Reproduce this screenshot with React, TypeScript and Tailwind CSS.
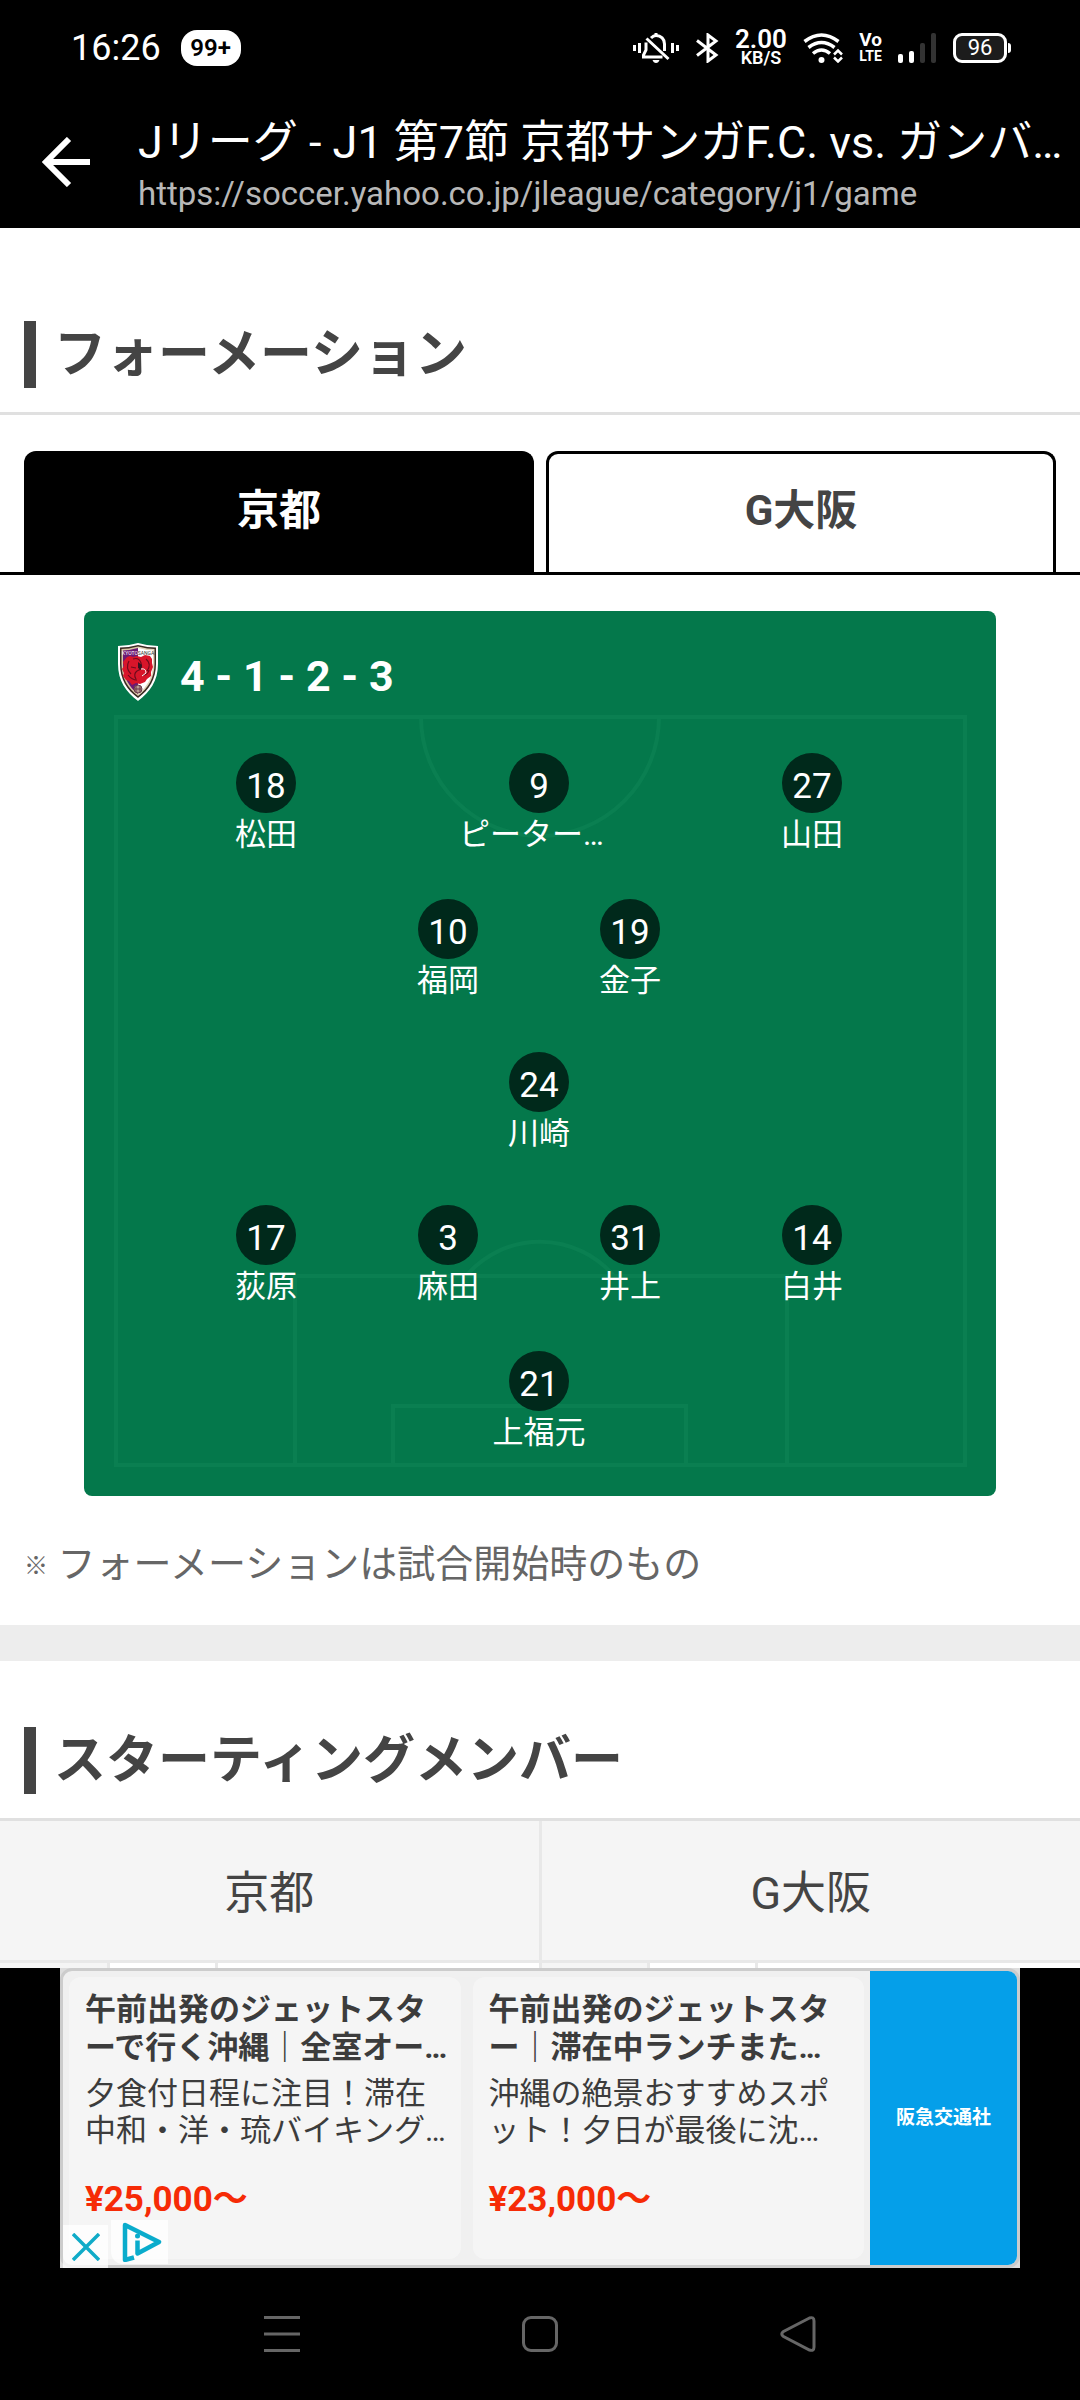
import { useState } from 'react';
import type { ReactNode } from 'react';

type Player = { no: number; name: string };

type Ad = { id: string; title: string[]; body: string[]; price: string };

// front to back, one array per line of the formation
const LINEUP: Player[][] = [
  [
    { no: 18, name: '松田' },
    { no: 9, name: 'ピーター…' },
    { no: 27, name: '山田' },
  ],
  [
    { no: 10, name: '福岡' },
    { no: 19, name: '金子' },
  ],
  [{ no: 24, name: '川崎' }],
  [
    { no: 17, name: '荻原' },
    { no: 3, name: '麻田' },
    { no: 31, name: '井上' },
    { no: 14, name: '白井' },
  ],
  [{ no: 21, name: '上福元' }],
];

const TEAMS = [
  { id: 'kyoto', label: '京都' },
  { id: 'gosaka', label: 'G大阪' },
];

const ADS: Ad[] = [
  {
    id: 'a1',
    title: ['午前出発のジェットスタ', 'ーで行く沖縄｜全室オー…'],
    body: ['夕食付日程に注目！滞在', '中和・洋・琉バイキング…'],
    price: '¥25,000〜',
  },
  {
    id: 'a2',
    title: ['午前出発のジェットスタ', 'ー｜滞在中ランチまた…'],
    body: ['沖縄の絶景おすすめスポ', 'ット！夕日が最後に沈…'],
    price: '¥23,000〜',
  },
];

function StatusBar() {
  return (
    <div className="flex h-24 items-center justify-between pl-[71px] pr-[69px]">
      <div className="flex items-center gap-5">
        <span className="text-[36px] leading-9">16:26</span>
        <span className="flex h-9 w-[60px] items-center justify-center rounded-2xl bg-white text-[24px] font-semibold leading-6 text-black">
          99+
        </span>
      </div>
      <div className="flex items-center">
        <svg className="h-[30px] w-[46px]" viewBox="0 0 46 30" fill="none" stroke="#fff" strokeWidth="3">
          <path d="M1.5 12v6M6.5 10v10M44.5 12v6M39.5 10v10" />
          <path d="M13 9.5v7.5l-2.5 5v2h19M18 5c2-2 3-2.500 5-2.500 5 0 8.500 3.500 8.500 8.500v7" />
          <path d="M23 0v3M13.5 5.5l22 20.500" />
          <path d="M19.5 27h7q-1 3-3.500 3t-3.500-3z" fill="#fff" stroke="none" />
        </svg>
        <svg className="ml-[17px] h-[30px] w-[23px]" viewBox="0 0 23 30" fill="none" stroke="#fff" strokeWidth="3">
          <path d="M1 7.5l19 14.500-8 6V2l8 6L1 22.500" />
        </svg>
        <div className="ml-4 flex w-[52px] flex-col items-center font-semibold">
          <span className="text-[26px] leading-5">2.00</span>
          <span className="text-[18px] leading-[18px]">KB/S</span>
        </div>
        <svg className="ml-4 h-[30px] w-10" viewBox="0 0 40 30" fill="none" stroke="#fff" strokeWidth="3.5">
          <path d="M1.5 8.5Q18.5-4.500 35.500 8.500M5.5 14.500Q18.500 4.500 31.500 14.500M10 20.500Q18.500 13.500 27 20.500" />
          <circle cx="18.5" cy="27" r="3" fill="#fff" stroke="none" />
          <path d="M31 21.5l4-4 4 4M31 24.500l4 4 4-4" strokeWidth="2.5" />
        </svg>
        <div className="ml-4 flex w-[23px] flex-col items-center font-bold">
          <span className="text-[19px] leading-4">Vo</span>
          <span className="text-[14px] leading-4">LTE</span>
        </div>
        <svg className="ml-4 h-[30px] w-[39px]" viewBox="0 0 39 30" fill="#fff">
          <rect x="0" y="21" width="5" height="9" rx="2" />
          <rect x="11" y="18" width="5" height="12" rx="2" />
          <rect x="22" y="10" width="5" height="20" rx="2" fill="#333" />
          <rect x="33" y="0" width="5" height="30" rx="2" fill="#333" />
        </svg>
        <div className="ml-4 flex h-[30px] w-[54px] items-center justify-center rounded-[9px] border-[3px] border-white bg-[#1c1c1c] text-[22px] leading-6">
          96
        </div>
        <div className="ml-px h-[10px] w-[3px] rounded-r bg-white" />
      </div>
    </div>
  );
}

function TitleBar() {
  return (
    <div className="flex h-[132px] items-center pl-[42px]">
      <button type="button" aria-label="戻る" className="w-24">
        <svg className="h-[50px] w-12" viewBox="0 0 48 50" fill="none" stroke="#fff" strokeWidth="6">
          <path d="M27 2L4 25l23 23M3 25h45" />
        </svg>
      </button>
      <div className="min-w-0 flex-1 whitespace-nowrap pt-[10px]">
        <div className="text-[45px] leading-[54px]">Jリーグ - J1 第7節 京都サンガF.C. vs. ガンバ…</div>
        <a href="#game" className="block text-[33px] leading-[48px] text-[#b8b8b8]">
          https://soccer.yahoo.co.jp/jleague/category/j1/game
        </a>
      </div>
    </div>
  );
}

function SectionHeading({ children }: { children: ReactNode }) {
  return (
    <div className="border-b-[3px] border-[#e0e0e0] px-6 pb-6">
      <h2 className="border-l-[12px] border-[#444] pl-[18px] text-[52px] font-bold leading-[67px]">{children}</h2>
    </div>
  );
}

function Crest() {
  return (
    <svg className="h-[60px] w-[42px]" viewBox="0 0 42 60">
      <path d="M21 1Q31 4 41 4V22C41 39 33 50 21 59 9 50 1 39 1 22V4Q11 4 21 1Z" fill="#fff" />
      <path d="M21 3Q31 5.5 39 5.5V22C39 37 32 48 21 56 10 48 3 37 3 22V5.5Q11 5.5 21 3Z" fill="#3b2a22" />
      <path d="M21 4.5Q11 7 4.500 7V22C4.500 36 11 46.500 21 54Z" fill="#d9c7a5" />
      <path d="M21 4.5Q31 7 37.500 7V22C37.500 36 31 46.500 21 54Z" fill="#e3d5bb" />
      <path d="M21 6Q11 8.5 6 8.5V22C6 35 12 45 21 52Z" fill="#6b1a74" />
      <path d="M21 6Q31 8.5 36 8.5V22C36 35 30 45 21 52Z" fill="#fff" />
      <text x="13" y="13" fontSize="5" textAnchor="middle" fill="#fff">KYOTO</text>
      <text x="29" y="13" fontSize="5" textAnchor="middle" fill="#333">SANGA</text>
      <path
        d="M10 15l3-1 3 1 4-1 4 1 4-2 5 1 2 3v4l1 4-2 5v4l-4 3-2 3-5 2-4-1-4 2-3-4-3-1-3-4 1-3-2-4 2-3-1-4z"
        fill="#d8152a"
      />
      <path
        d="M12 19q-4 7 2 13M16 17q6-2 8 4t-4 8q-4 3-1 8M29 17q6 5 1 12M14 25l5 1M26 33q5 0 6-5M11 33q4 5 9 5"
        fill="none"
        stroke="#6d0b1c"
        strokeWidth="1.2"
      />
      <path d="M21 20l4 3-1 5-3-2z" fill="#351320" />
      <path d="M24 27q5-1 5 4l-4 3" fill="none" stroke="#fff" />
      <circle cx="21" cy="47" r="4" fill="#b99a93" stroke="#6b3a4a" />
      <path d="M19 44v6M23 44v6M17.5 47h7" stroke="#6b3a4a" />
    </svg>
  );
}

function PlayerMark({ player, wide }: { player: Player; wide: boolean }) {
  return (
    <li className={`${wide ? 'w-[30%]' : 'w-1/5'} flex flex-col items-center whitespace-nowrap`}>
      <span className="flex h-[60px] w-[60px] items-center justify-center rounded-full bg-[#00291b] pt-2 text-[35px] leading-9">
        {player.no}
      </span>
      {/* long names fill the whole name box and start at its left edge */}
      <span className={`pt-[3px] text-[31px] leading-[38px] ${player.name.length > 4 ? 'w-40' : ''}`}>
        {player.name}
      </span>
    </li>
  );
}

function Pitch({ players }: { players: Player[][] }) {
  return (
    <div className="relative mx-[84px] mt-9 h-[885px] overflow-hidden rounded-lg bg-[#04784b] text-white">
      <svg
        className="absolute inset-0 h-full w-full"
        viewBox="0 0 912 885"
        preserveAspectRatio="none"
        fill="none"
        stroke="#0a7f51"
        strokeWidth="4"
      >
        <rect x="32" y="106" width="849" height="748" />
        <path d="M337 106a119 119 0 0 0 238 0" />
        <path d="M211 854V665h492v189M309 854V795h293v59" />
        <path d="M382 665a97 97 0 0 1 148 0" />
      </svg>
      <div className="relative">
        <div className="flex h-[142px] items-start gap-[21px] pl-[33px] pt-[31px]">
          <Crest />
          <span className="pt-2 text-[43px] font-bold leading-[52px]">4 - 1 - 2 - 3</span>
        </div>
        <ul className="flex flex-col gap-[45px] pr-[2px]">
          {players.map((line, i) => (
            <li key={line[0].no} className={i === 2 || i === 3 ? 'pt-[7px]' : ''}>
              <ul className="flex justify-center">
                {line.map((p) => (
                  <PlayerMark key={p.no} player={p} wide={line.length === 3} />
                ))}
              </ul>
            </li>
          ))}
        </ul>
      </div>
    </div>
  );
}

function AdBanner() {
  return (
    <div className="relative mx-[60px] bg-[#ddd]">
      <div className="flex h-[300px] overflow-hidden rounded-xl border-[3px] border-[#ccc] bg-[#f0f0f0]">
        <div className="flex flex-1 gap-3 p-[6px]">
          {ADS.map((ad) => (
            <a
              key={ad.id}
              href={`#${ad.id}`}
              className="block flex-1 whitespace-nowrap rounded-xl bg-[#f5f5f5] pl-4 pt-[14px] text-[31px] text-[#3c3c3c]"
            >
              <div className="font-bold leading-[38px]">
                {ad.title[0]}
                <br />
                {ad.title[1]}
              </div>
              <div className="mt-2 leading-[37px]">
                {ad.body[0]}
                <br />
                {ad.body[1]}
              </div>
              <div className="mt-[31px] text-[35px] font-bold leading-10 text-[#f62b06]">{ad.price}</div>
            </a>
          ))}
        </div>
        <a
          href="#sponsor"
          className="flex w-[147px] items-center justify-center bg-[#059fe9] text-[19px] font-bold text-white"
        >
          阪急交通社
        </a>
      </div>
      <button
        type="button"
        aria-label="広告を閉じる"
        className="absolute bottom-0 left-[3px] flex h-[43px] w-[45px] items-center justify-center bg-white/75"
      >
        <svg className="h-7 w-7" viewBox="0 0 28 28" stroke="#10abc8" strokeWidth="3.5">
          <path d="M1 1l26 26M27 1L1 27" />
        </svg>
      </button>
      <button
        type="button"
        aria-label="広告について"
        className="absolute bottom-1 left-[51px] flex h-11 w-[57px] items-center justify-center rounded-bl-xl bg-white/75 pl-1"
      >
        <svg className="h-10 w-10" viewBox="0 0 40 40" fill="none" stroke="#0aaccc" strokeWidth="4.5" strokeLinejoin="round">
          <path d="M12 35.5l-9 2.500V3L37 20 15.500 31.500V18.500" />
          <circle cx="15.5" cy="14" r="2.5" fill="#0aaccc" stroke="none" />
        </svg>
      </button>
    </div>
  );
}

function NavBar() {
  return (
    <nav className="flex h-[132px] items-center justify-center gap-[222px]">
      <button type="button" aria-label="履歴">
        <svg className="h-9 w-9" viewBox="0 0 36 36" stroke="#666" strokeWidth="3">
          <path d="M0 1.5h36M0 18h36M0 34.5h36" />
        </svg>
      </button>
      <button type="button" aria-label="ホーム" className="h-9 w-9 rounded-[9px] border-[3px] border-[#666]" />
      <button type="button" aria-label="戻る">
        <svg className="h-9 w-9" viewBox="0 0 36 36" fill="none" stroke="#666" strokeWidth="3">
          <path d="M29.5 2L3.5 15.5Q0 18 3.5 20.5L29.5 34Q34 35.5 34 31V5Q34 .5 29.5 2Z" />
        </svg>
      </button>
    </nav>
  );
}

export default function App() {
  const [team, setTeam] = useState('kyoto');

  return (
    <div className="flex min-h-screen flex-col overflow-x-hidden bg-black font-[Roboto,'Noto_Sans_CJK_JP',sans-serif] text-white">
      <header>
        <StatusBar />
        <TitleBar />
      </header>

      <main className="bg-white text-[#444]">
        <section className="pt-[93px]">
          <SectionHeading>フォーメーション</SectionHeading>
          <div role="tablist" className="mt-9 flex gap-3 border-b-[3px] border-black px-6">
            {TEAMS.map((t) => (
              <button
                key={t.id}
                type="button"
                role="tab"
                aria-selected={team === t.id}
                onClick={() => setTeam(t.id)}
                className={`h-[121px] flex-1 rounded-t-xl border-x-[3px] border-t-[3px] border-black pb-[6px] text-[42px] font-bold ${
                  team === t.id ? 'bg-black text-white' : 'bg-white text-[#444]'
                }`}
              >
                {t.label}
              </button>
            ))}
          </div>
          <Pitch players={team === 'kyoto' ? LINEUP : []} />
          <p className="mt-10 px-6 pb-8 text-[38px] leading-[57px] text-[#666]">
            <span className="align-[3px] text-[24px] font-bold leading-none">※</span> フォーメーションは試合開始時のもの
          </p>
        </section>

        <section className="border-t-[36px] border-[#ededed] pt-[66px]">
          <SectionHeading>スターティングメンバー</SectionHeading>
          <table className="w-full table-fixed border-collapse">
            <colgroup>
              <col className="w-[10%]" />
              <col className="w-[10%]" />
              <col className="w-[30%]" />
              <col className="w-[10%]" />
              <col className="w-[10%]" />
              <col className="w-[30%]" />
            </colgroup>
            <thead>
              <tr className="h-[140px] border-b-[3px] border-[#e8e8e8] bg-[#f5f5f5] text-[45px]">
                <th colSpan={3} className="border-r-[3px] border-[#e8e8e8] pt-[6px] font-normal">
                  京都
                </th>
                <th colSpan={3} className="pt-[6px] font-normal">
                  G大阪
                </th>
              </tr>
            </thead>
            <tbody>
              <tr className="h-[7px]">
                <td className="border-r-[3px] border-[#e8e8e8] bg-[#f5f5f5] p-0" />
                <td className="border-r-[3px] border-[#e8e8e8] p-0" />
                <td className="border-r-[3px] border-[#e8e8e8] p-0" />
                <td className="border-r-[3px] border-[#e8e8e8] bg-[#f5f5f5] p-0" />
                <td className="border-r-[3px] border-[#e8e8e8] p-0" />
                <td className="p-0" />
              </tr>
            </tbody>
          </table>
        </section>
      </main>

      <AdBanner />
      <NavBar />
    </div>
  );
}
